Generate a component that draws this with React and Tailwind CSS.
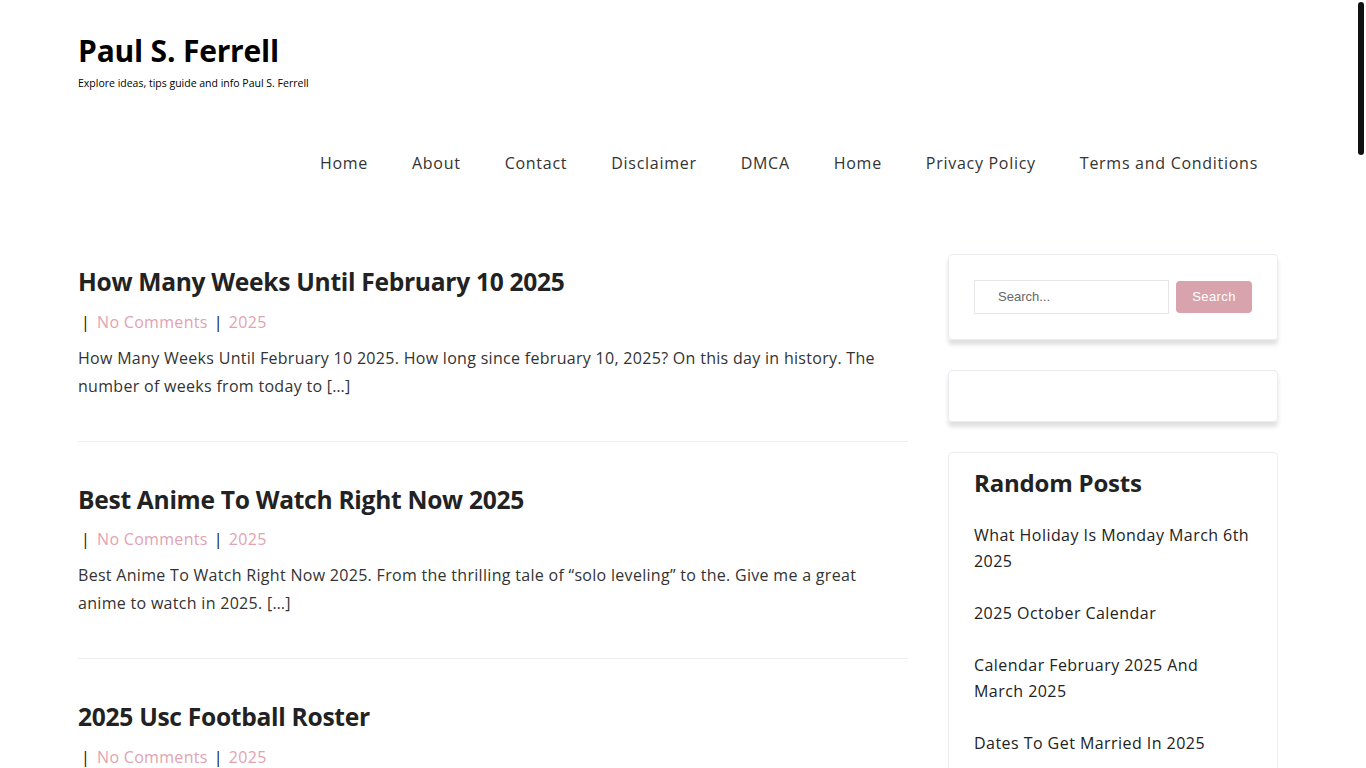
import React from "react";

const font = { fontFamily: '"Open Sans", "Liberation Sans", sans-serif' };

const nav = ["Home", "About", "Contact", "Disclaimer", "DMCA", "Home", "Privacy Policy", "Terms and Conditions"];

const posts = [
  {
    title: "How Many Weeks Until February 10 2025",
    excerpt:
      "How Many Weeks Until February 10 2025. How long since february 10, 2025? On this day in history. The number of weeks from today to […]",
  },
  {
    title: "Best Anime To Watch Right Now 2025",
    excerpt:
      "Best Anime To Watch Right Now 2025. From the thrilling tale of \u201csolo leveling\u201d to the. Give me a great anime to watch in 2025. […]",
  },
  {
    title: "2025 Usc Football Roster",
    excerpt: "2025 Usc Football Roster. […]",
  },
];

const random = [
  "What Holiday Is Monday March 6th 2025",
  "2025 October Calendar",
  "Calendar February 2025 And March 2025",
  "Dates To Get Married In 2025",
];

export default function App() {
  return (
    <div className="bg-white min-h-screen text-[#222]" style={font}>
      <div className="fixed right-[2px] top-[2px] w-[6px] h-[153px] rounded-full bg-[#111] z-10" />
      <div className="w-[1200px] ml-[78px]">
        <header className="pt-[31px]">
          <h1 className="text-[30px] leading-[40px] font-bold text-black tracking-[-0.2px]">Paul S. Ferrell</h1>
          <p className="text-[10.5px] leading-[14px] mt-[5px] text-black">Explore ideas, tips guide and info Paul S. Ferrell</p>
          <nav className="flex justify-end pr-[20px] mt-[53px] h-[40px] items-center">
            {nav.map((n, i) => (
              <a key={i} className="px-[22px] text-[16px] font-medium text-[#333] tracking-[0.72px] last:pr-0">
                {n}
              </a>
            ))}
          </nav>
        </header>
        <div className="flex gap-[40px] mt-[71px]">
          <main className="w-[830px]">
            {posts.map((p, i) => (
              <article key={i} className="pt-[12px] pb-[41px] mb-[30px] border-b border-[#eeeef2]">
                <h2 className="text-[24.6px] leading-[32px] font-bold text-[#222] tracking-[-0.3px]">{p.title}</h2>
                <div className="mt-[11.5px] text-[16px] leading-[24px] flex items-center tracking-[0.3px]">
                  <span className="ml-[3px] mr-[7px] text-[#111]">|</span>
                  <a className="text-[#e2a3b1]">No Comments</a>
                  <span className="mx-[6px] text-[#111]">|</span>
                  <a className="text-[#e2a3b1]">2025</a>
                </div>
                <p className="mt-[10px] text-[16px] leading-[28px] text-[#333] tracking-[0.3px]">{p.excerpt}</p>
              </article>
            ))}
          </main>
          <aside className="w-[330px] flex flex-col gap-[30px]">
            <div className="border border-[#ececf0] rounded-[4px] shadow-[0_5px_4px_rgba(0,0,0,0.12)] px-[25px] py-[25px] flex items-center gap-[7px]">
              <div className="w-[195px] h-[34px] border border-[#e6e6ea] flex items-center pl-[23px] text-[13px] text-[#666]" style={{ fontFamily: '"Liberation Sans", Arial, sans-serif' }}>
                Search...
              </div>
              <button className="w-[76px] h-[32px] rounded-[4px] bg-[#d8a3ad] text-white text-[13px] tracking-[0.4px]" style={{ fontFamily: '"Liberation Sans", Arial, sans-serif' }}>
                Search
              </button>
            </div>
            <div className="h-[52px] border border-[#ececf0] rounded-[4px] shadow-[0_5px_4px_rgba(0,0,0,0.12)]" />
            <div className="border border-[#ececf0] rounded-[4px] px-[25px] pt-[13px] pb-[20px]">
              <h3 className="text-[24px] leading-[34px] font-bold text-[#222] tracking-[-0.2px]">Random Posts</h3>
              <ul className="mt-[22px] flex flex-col gap-[26px]">
                {random.map((r, i) => (
                  <li key={i} className="text-[16px] leading-[26px] text-[#222] tracking-[0.45px]">{r}</li>
                ))}
              </ul>
            </div>
          </aside>
        </div>
      </div>
    </div>
  );
}
